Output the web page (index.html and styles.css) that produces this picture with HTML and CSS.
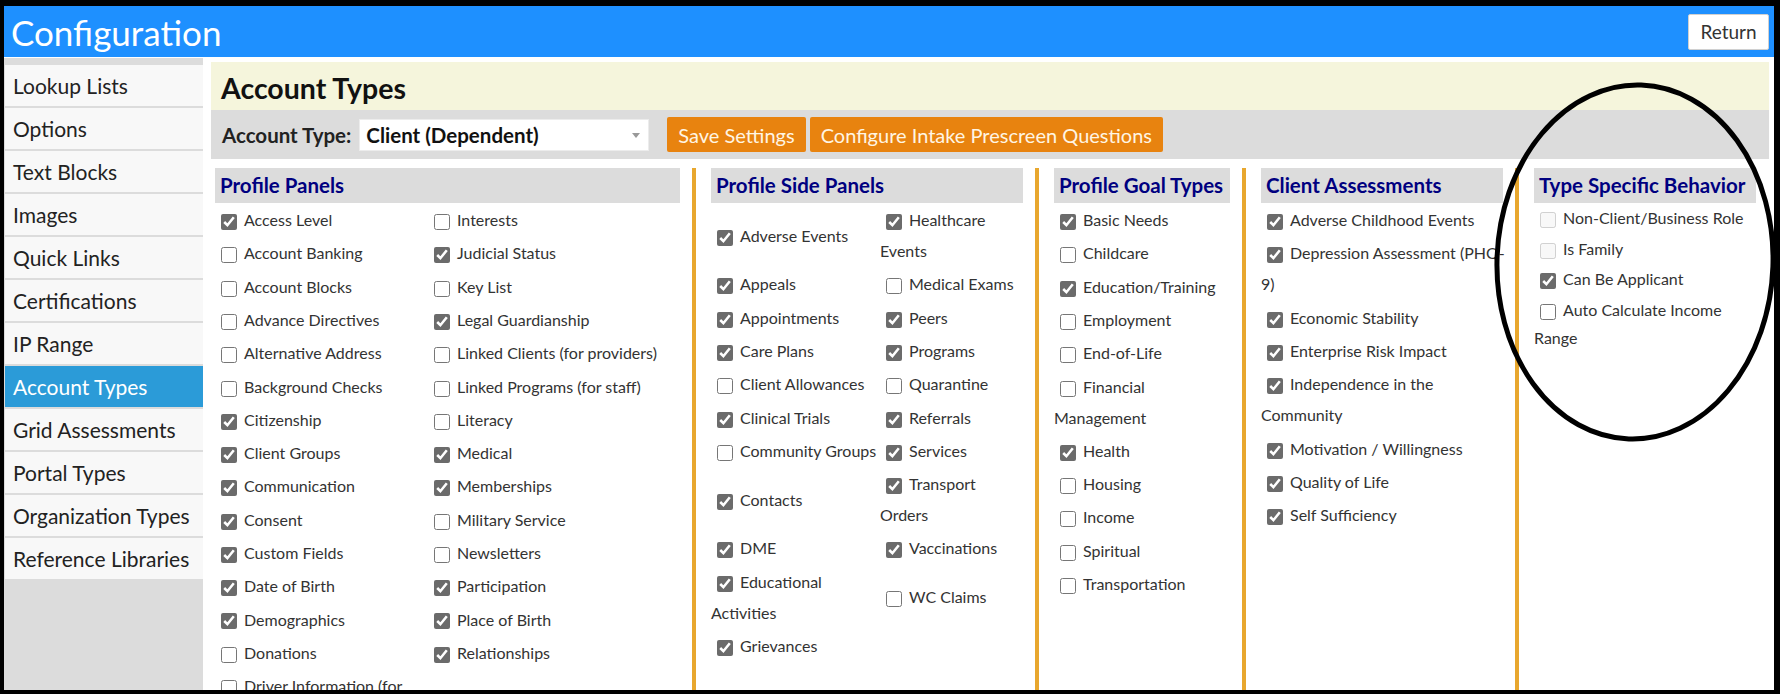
FILE: index.html
```html
<!DOCTYPE html>
<html lang="en">
<head>
    <meta charset="UTF-8">
    <meta name="viewport" content="width=device-width, initial-scale=1.0">
    <title>Configuration - Account Types</title>
    <link rel="stylesheet" href="styles.css">
</head>
<body>

<div class="frame">
    <header class="topbar">
        <h1 class="app-title">Configuration</h1>
        <button class="return-btn">Return</button>
    </header>

    <div class="layout">
        <nav class="sidebar">
            <a class="nav-item">Lookup Lists</a>
            <a class="nav-item">Options</a>
            <a class="nav-item">Text Blocks</a>
            <a class="nav-item">Images</a>
            <a class="nav-item">Quick Links</a>
            <a class="nav-item">Certifications</a>
            <a class="nav-item">IP Range</a>
            <a class="nav-item active">Account Types</a>
            <a class="nav-item">Grid Assessments</a>
            <a class="nav-item">Portal Types</a>
            <a class="nav-item">Organization Types</a>
            <a class="nav-item">Reference Libraries</a>
        </nav>

        <main class="main">
            <h2 class="page-title">Account Types</h2>

            <div class="toolbar">
                <label class="type-label" for="accountType">Account Type:</label>
                <span class="select-wrap">
                    <select id="accountType" class="type-select">
                        <option>Client (Dependent)</option>
                    </select>
                </span>
                <button class="action-btn save-btn">Save Settings</button>
                <button class="action-btn">Configure Intake Prescreen Questions</button>
            </div>

            <div class="columns">
                <!-- Profile Panels: two columns -->
                <section class="col col-panels">
                    <h3 class="col-head">Profile Panels</h3>
                    <div class="opts opts-split">
                        <label class="opt"><input type="checkbox" checked>Access Level</label>
                        <label class="opt"><input type="checkbox">Interests</label>
                        <label class="opt"><input type="checkbox">Account Banking</label>
                        <label class="opt"><input type="checkbox" checked>Judicial Status</label>
                        <label class="opt"><input type="checkbox">Account Blocks</label>
                        <label class="opt"><input type="checkbox">Key List</label>
                        <label class="opt"><input type="checkbox">Advance Directives</label>
                        <label class="opt"><input type="checkbox" checked>Legal Guardianship</label>
                        <label class="opt"><input type="checkbox">Alternative Address</label>
                        <label class="opt"><input type="checkbox">Linked Clients (for providers)</label>
                        <label class="opt"><input type="checkbox">Background Checks</label>
                        <label class="opt"><input type="checkbox">Linked Programs (for staff)</label>
                        <label class="opt"><input type="checkbox" checked>Citizenship</label>
                        <label class="opt"><input type="checkbox">Literacy</label>
                        <label class="opt"><input type="checkbox" checked>Client Groups</label>
                        <label class="opt"><input type="checkbox" checked>Medical</label>
                        <label class="opt"><input type="checkbox" checked>Communication</label>
                        <label class="opt"><input type="checkbox" checked>Memberships</label>
                        <label class="opt"><input type="checkbox" checked>Consent</label>
                        <label class="opt"><input type="checkbox">Military Service</label>
                        <label class="opt"><input type="checkbox" checked>Custom Fields</label>
                        <label class="opt"><input type="checkbox">Newsletters</label>
                        <label class="opt"><input type="checkbox" checked>Date of Birth</label>
                        <label class="opt"><input type="checkbox" checked>Participation</label>
                        <label class="opt"><input type="checkbox" checked>Demographics</label>
                        <label class="opt"><input type="checkbox" checked>Place of Birth</label>
                        <label class="opt"><input type="checkbox">Donations</label>
                        <label class="opt"><input type="checkbox" checked>Relationships</label>
                        <label class="opt"><input type="checkbox">Driver Information (for providers)</label>
                    </div>
                </section>

                <!-- Profile Side Panels: two columns, long names wrap -->
                <section class="col col-side">
                    <h3 class="col-head">Profile Side Panels</h3>
                    <div class="opts opts-split">
                        <label class="opt"><input type="checkbox" checked>Adverse Events</label>
                        <label class="opt"><input type="checkbox" checked>Healthcare Events</label>
                        <label class="opt"><input type="checkbox" checked>Appeals</label>
                        <label class="opt"><input type="checkbox">Medical Exams</label>
                        <label class="opt"><input type="checkbox" checked>Appointments</label>
                        <label class="opt"><input type="checkbox" checked>Peers</label>
                        <label class="opt"><input type="checkbox" checked>Care Plans</label>
                        <label class="opt"><input type="checkbox" checked>Programs</label>
                        <label class="opt"><input type="checkbox">Client Allowances</label>
                        <label class="opt"><input type="checkbox">Quarantine</label>
                        <label class="opt"><input type="checkbox" checked>Clinical Trials</label>
                        <label class="opt"><input type="checkbox" checked>Referrals</label>
                        <label class="opt"><input type="checkbox">Community Groups</label>
                        <label class="opt"><input type="checkbox" checked>Services</label>
                        <label class="opt"><input type="checkbox" checked>Contacts</label>
                        <label class="opt"><input type="checkbox" checked>Transport Orders</label>
                        <label class="opt"><input type="checkbox" checked>DME</label>
                        <label class="opt"><input type="checkbox" checked>Vaccinations</label>
                        <label class="opt"><input type="checkbox" checked>Educational Activities</label>
                        <label class="opt"><input type="checkbox">WC Claims</label>
                        <label class="opt"><input type="checkbox" checked>Grievances</label>
                    </div>
                </section>

                <section class="col col-goals">
                    <h3 class="col-head">Profile Goal Types</h3>
                    <div class="opts">
                        <label class="opt"><input type="checkbox" checked>Basic Needs</label>
                        <label class="opt"><input type="checkbox">Childcare</label>
                        <label class="opt"><input type="checkbox" checked>Education/Training</label>
                        <label class="opt"><input type="checkbox">Employment</label>
                        <label class="opt"><input type="checkbox">End-of-Life</label>
                        <label class="opt"><input type="checkbox">Financial Management</label>
                        <label class="opt"><input type="checkbox" checked>Health</label>
                        <label class="opt"><input type="checkbox">Housing</label>
                        <label class="opt"><input type="checkbox">Income</label>
                        <label class="opt"><input type="checkbox">Spiritual</label>
                        <label class="opt"><input type="checkbox">Transportation</label>
                    </div>
                </section>

                <section class="col col-assess">
                    <h3 class="col-head">Client Assessments</h3>
                    <div class="opts">
                        <label class="opt"><input type="checkbox" checked>Adverse Childhood Events</label>
                        <label class="opt"><span class="nobr"><input type="checkbox" checked>Depression Assessment (PHQ-</span><wbr>9)</label>
                        <label class="opt"><input type="checkbox" checked>Economic Stability</label>
                        <label class="opt"><input type="checkbox" checked>Enterprise Risk Impact</label>
                        <label class="opt"><input type="checkbox" checked>Independence in the Community</label>
                        <label class="opt"><input type="checkbox" checked>Motivation / Willingness</label>
                        <label class="opt"><input type="checkbox" checked>Quality of Life</label>
                        <label class="opt"><input type="checkbox" checked>Self Sufficiency</label>
                    </div>
                </section>

                <section class="col col-behavior">
                    <h3 class="col-head">Type Specific Behavior</h3>
                    <div class="opts opts-tight">
                        <label class="opt"><input type="checkbox" disabled>Non-Client/Business Role</label>
                        <label class="opt"><input type="checkbox" disabled>Is Family</label>
                        <label class="opt"><input type="checkbox" checked>Can Be Applicant</label>
                        <label class="opt"><input type="checkbox">Auto Calculate Income Range</label>
                    </div>
                </section>
            </div>
        </main>
    </div>

    <!-- hand-drawn ring around the behavior options -->
    <svg class="ring" width="300" height="380" viewBox="0 0 300 380">
        <ellipse cx="149" cy="193" rx="138" ry="177" transform="rotate(2 149 193)"
                 fill="none" stroke="#000" stroke-width="5"/>
    </svg>
</div>

</body>
</html>
```

FILE: styles.css
```css
body {
    margin: 0;
    font-family: Lato, "Liberation Sans", sans-serif;
    color: #333;
    background: #fff;
}

.frame {
    position: relative;
    height: 694px;
    box-sizing: border-box;
    border-style: solid;
    border-color: #000;
    border-width: 6px 6px 4px 4px;
    display: flex;
    flex-direction: column;
    overflow: hidden;
    background: #fff;
}

/* top bar */
.topbar {
    flex: none;
    height: 51px;
    background: #1e90ff;
    display: flex;
    align-items: center;
    justify-content: space-between;
    padding: 0 5px 0 7px;
}

.app-title {
    margin: 0;
    font-size: 35px;
    font-weight: normal;
    color: #fff;
}

.return-btn {
    width: 81px;
    height: 36px;
    background: #fff;
    border: 1px solid #d0d0d0;
    border-radius: 2px;
    font-family: Lato, "Liberation Sans", sans-serif;
    font-size: 19px;
    color: #333;
    cursor: pointer;
}

.layout {
    flex: 1;
    min-height: 0;
    display: flex;
}

/* left menu */
.sidebar {
    flex: none;
    width: 199px;
    box-sizing: border-box;
    margin-top: 1px;
    padding: 7px 0 0 1px;
    background: #dcdcdc;
}

.nav-item {
    display: block;
    height: 41px;
    line-height: 41px;
    margin-bottom: 2px;
    padding-left: 8px;
    background: #f8f8f8;
    font-size: 21px;
    color: #222;
    cursor: pointer;
}

.nav-item.active {
    background: #2b9bd8;
    color: #fff;
}

/* main panel */
.main {
    flex: 1;
    min-width: 0;
    margin: 5px 5px 0 8px;
    display: flex;
    flex-direction: column;
}

.page-title {
    margin: 0;
    height: 48px;
    line-height: 52px;
    padding-left: 10px;
    background: #f5f5dc;
    font-size: 28.5px;
    font-weight: bold;
    color: #111;
}

.toolbar {
    flex: none;
    height: 49px;
    display: flex;
    align-items: center;
    padding-left: 11px;
    background: #dcdcdc;
}

.type-label {
    font-size: 20.5px;
    font-weight: bold;
    color: #222;
}

.select-wrap {
    position: relative;
    margin-left: 8px;
}

.select-wrap::after {
    content: "";
    position: absolute;
    right: 9px;
    top: 14px;
    border-left: 4px solid transparent;
    border-right: 4px solid transparent;
    border-top: 5px solid #999;
}

.type-select {
    appearance: none;
    -webkit-appearance: none;
    display: block;
    width: 290px;
    height: 32px;
    padding: 0 6px;
    border: 1px solid #ececec;
    border-radius: 0;
    background: #fff;
    font-family: Lato, "Liberation Sans", sans-serif;
    font-size: 20.5px;
    font-weight: bold;
    color: #111;
}

.action-btn {
    height: 35px;
    margin-left: 4px;
    padding: 0 11px;
    border: none;
    border-radius: 2px;
    background: #e8830f;
    font-family: Lato, "Liberation Sans", sans-serif;
    font-size: 20px;
    color: #fff5e3;
    cursor: pointer;
}

.save-btn {
    margin-left: 18px;
}

/* option columns */
.columns {
    flex: 1;
    min-height: 0;
    display: flex;
    padding: 9px 0 0 4px;
    background: #fff;
}

.col {
    flex: none;
    padding: 0 12px 0 15px;
}

.col:first-child {
    padding-left: 0;
}

.col + .col {
    border-left: 4px solid #e8a72e;
}

.col-panels { width: 465px; }
.col-side { width: 312px; }
.col-goals { width: 176px; }
.col-assess { width: 242px; }
.col-behavior { width: 222px; }

.col-head {
    margin: 0;
    height: 35px;
    line-height: 35px;
    padding-left: 5px;
    background: #dcdcdc;
    font-size: 20.5px;
    font-weight: bold;
    color: #000080;
    white-space: nowrap;
}

.opts {
    display: grid;
    align-items: center;
}

.opts-split {
    grid-template-columns: 213px 1fr;
}

.col-side .opts-split {
    grid-template-columns: 169px 1fr;
}

.opt {
    display: block;
    padding: 1.15px 0;
    line-height: 31px;
    font-size: 16px;
    color: #333;
}

.opts-tight .opt {
    padding: 1.3px 0;
    line-height: 28px;
}

.opt input {
    width: 16px;
    height: 16px;
    margin: 0 7px 0 6px;
    vertical-align: middle;
    accent-color: #6b6b6b;
}

.nobr {
    white-space: nowrap;
}

.ring {
    position: absolute;
    left: 1482px;
    top: 63px;
    pointer-events: none;
}
```
